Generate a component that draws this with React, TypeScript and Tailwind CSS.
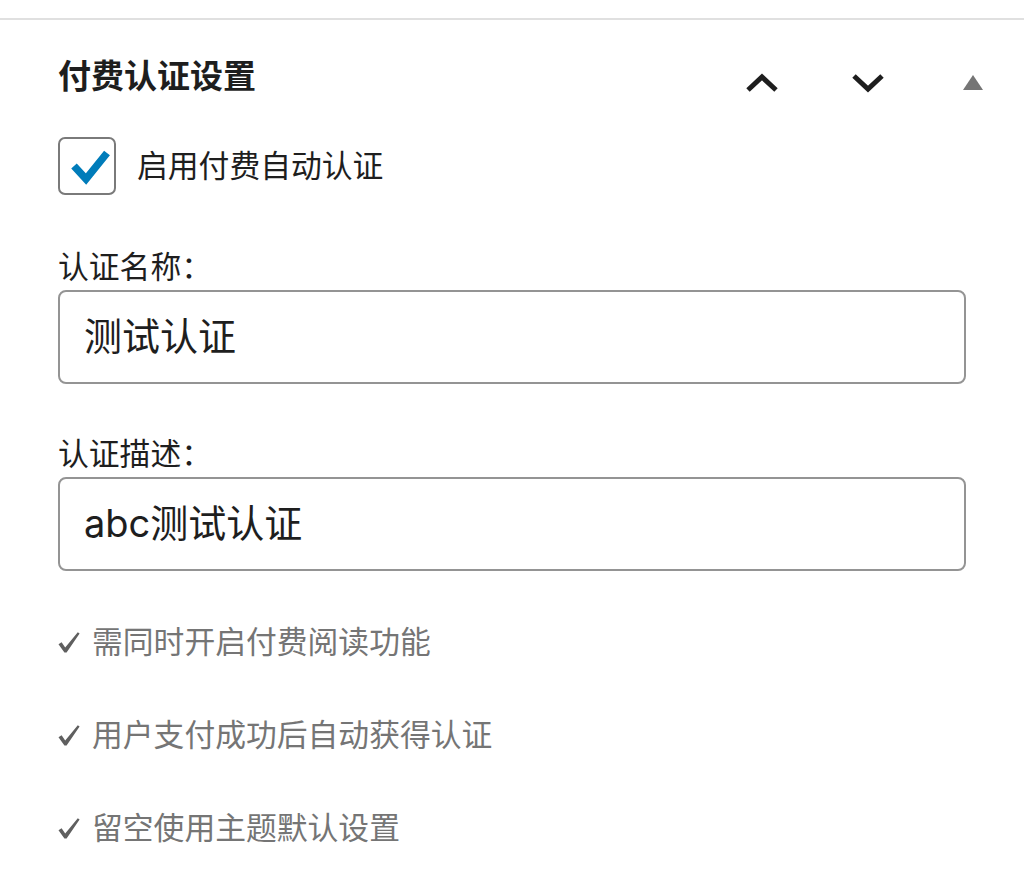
const FONT = "font-['Inter','Noto_Sans_CJK_SC',sans-serif]";

const tips = ["需同时开启付费阅读功能", "用户支付成功后自动获得认证", "留空使用主题默认设置"];

function ChevronUp() {
  return (
    <svg width="34" height="20" viewBox="0 0 34 20" fill="none">
      <polyline points="3,17 17,4 31,17" stroke="#1e1e1e" strokeWidth="5" />
    </svg>
  );
}

function ChevronDown() {
  return (
    <svg width="34" height="20" viewBox="0 0 34 20" fill="none">
      <polyline points="3,3 17,16 31,3" stroke="#1e1e1e" strokeWidth="5" />
    </svg>
  );
}

function TickMark() {
  return (
    <svg width="22" height="21" viewBox="0 0 22 21" className="mr-[12px] shrink-0">
      <path d="M0.5 12.2 L3.6 10.2 L7.2 15.4 L19.8 0.3 L21.6 1.5 L8.6 20.6 L6.4 20.6 Z" fill="#5f5f5f" />
    </svg>
  );
}

function Field({ label, value, top }: { label: string; value: string; top: string }) {
  return (
    <div className={top}>
      <div className="mb-[3px] text-[30.8px] leading-[40px] text-[#1e1e1e]">{label}</div>
      <input
        readOnly
        value={value}
        className="h-[94px] w-full rounded-[8px] border-2 border-[#949494] bg-white px-[24px] pb-[8px] text-[38px] text-[#1e1e1e] outline-none"
      />
    </div>
  );
}

export default function App() {
  return (
    <div className={`h-[891px] w-[1024px] bg-white pt-[18px] ${FONT}`}>
      <div className="border-t-2 border-[#e0e0e0]" />

      <div className="flex h-[112px] items-center justify-between pl-[58px] pr-[41px]">
        <h2 className="text-[33px] font-bold leading-[44px] text-[#1e1e1e]">付费认证设置</h2>
        <div className="mt-[13px] flex items-center">
          <ChevronUp />
          <div className="ml-[72px]">
            <ChevronDown />
          </div>
          <svg className="ml-[78px]" width="20" height="15" viewBox="0 0 20 15">
            <polygon points="10,0 20,15 0,15" fill="#757575" />
          </svg>
        </div>
      </div>

      <div className="px-[58px]">
        <label className="mt-[5px] flex items-center">
          <span className="flex h-[58px] w-[58px] items-center justify-center rounded-[7px] border-2 border-[#7a7a7a] bg-white">
            <svg width="58" height="58" viewBox="0 0 58 58" fill="none" className="-m-[2px]">
              <polyline points="16,29 28,42 49,16" stroke="#007cba" strokeWidth="7.5" />
            </svg>
          </span>
          <span className="ml-[21px] text-[30.8px] leading-[40px] text-[#1e1e1e]">启用付费自动认证</span>
        </label>

        <Field label="认证名称：" value="测试认证" top="mt-[52px]" />
        <Field label="认证描述：" value="abc测试认证" top="mt-[50px]" />

        <div className="mt-[51px]">
          {tips.map((t, i) => (
            <p
              key={t}
              className={`flex items-center text-[30.8px] leading-[40px] text-[#757575] ${i > 0 ? "mt-[53px]" : ""}`}
            >
              <TickMark />
              {t}
            </p>
          ))}
        </div>
      </div>
    </div>
  );
}
